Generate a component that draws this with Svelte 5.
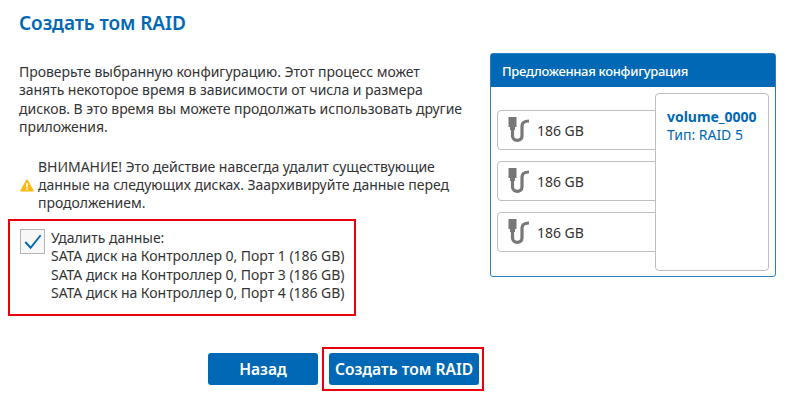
<script>
  const disks = [1, 2, 3];
  const ports = [1, 3, 4];
</script>

<div class="page">
  <h1>Создать том RAID</h1>
  <div class="columns">
    <div class="left">
      <p class="intro">Проверьте выбранную конфигурацию. Этот процесс может занять некоторое время в зависимости от числа и размера дисков. В это время вы можете продолжать использовать другие приложения.</p>
      <div class="warn">
        <svg class="warn-icon" viewBox="0 0 14 13" width="14" height="13"><path d="M7 1.200 13 11.800H1Z" fill="#fcb913" stroke="#fcb913" stroke-width="1.600" stroke-linejoin="round"/><rect x="6.200" y="4" width="1.600" height="4.400" fill="#fff"/><rect x="6.200" y="9.300" width="1.600" height="1.600" fill="#fff"/></svg>
        <p>ВНИМАНИЕ! Это действие навсегда удалит существующие данные на следующих дисках. Заархивируйте данные перед продолжением.</p>
      </div>
      <div class="confirm">
        <span class="check">
          <svg viewBox="0 0 24 24" width="23" height="23"><path d="M4.500 12.500 10 18.500 20.500 5.500" fill="none" stroke="#0068b5" stroke-width="2"/></svg>
        </span>
        <div class="confirm-text">
          <div>Удалить данные:</div>
          {#each ports as p}
            <div>SATA диск на Контроллер 0, Порт {p} (186 GB)</div>
          {/each}
        </div>
      </div>
    </div>
    <section class="panel">
      <header>Предложенная конфигурация</header>
      <div class="panel-body">
        <div class="disks">
          {#each disks as d (d)}
            <div class="disk">
              <svg viewBox="0 0 24 28" width="24" height="28">
                <rect x="1.500" y="1" width="8" height="10" fill="#777"/>
                <rect x="3" y="11" width="5" height="3" fill="#777"/>
                <path d="M5.500 14v6c0 5.500 9.500 6 9.500 0V10c0-3 2-5 7-5" fill="none" stroke="#777" stroke-width="3.200"/>
              </svg>
              <span>186 GB</span>
            </div>
          {/each}
        </div>
        <div class="volume">
          <strong>volume_0000</strong>
          <span>Тип: RAID 5</span>
        </div>
      </div>
    </section>
  </div>
  <div class="actions">
    <button class="btn back">Назад</button>
    <div class="highlight"><button class="btn">Создать том RAID</button></div>
  </div>
</div>

<style>
  :global(body) { margin: 0; background: #fff; }
  .page {
    width: 800px; height: 416px; box-sizing: border-box; overflow: hidden;
    padding: 11px 24px 0 19px;
    font-family: "Noto Sans", sans-serif; font-size: 14px; color: #333;
    letter-spacing: -0.03px;
  }
  h1 { margin: 0; font-size: 19px; line-height: 24px; font-weight: 600; color: #0068b5; letter-spacing: -0.1px; }
  .columns { display: flex; justify-content: space-between; align-items: flex-start; margin-top: 18px; }
  .left { width: 450px; margin-top: 10px; }
  p { margin: 0; line-height: 18.400px; }
  .intro { width: 445px; }
  .warn { display: flex; align-items: center; gap: 4px; margin-top: 21px; margin-left: 1px; width: 440px; }
  .warn-icon { flex: none; }
  .confirm {
    display: flex; box-sizing: border-box; width: 348px; height: 97px;
    margin: 6px 0 0 -11px; padding: 8px 0 0 10px; gap: 6px;
    border: 2px solid #e8000d;
    line-height: 18.400px;
  }
  .check {
    flex: none; width: 25px; height: 25px; box-sizing: border-box; border: 1px solid #b3b3b3; background: #f7f7f7;
  }
  .check svg { display: block; }
  .panel {
    position: relative; width: 286px; height: 224px; box-sizing: border-box;
    border: 1px solid #2a7fc4; border-radius: 3px;
  }
  header {
    height: 33px; background: #0068b5; color: #fff; font-weight: 500; font-size: 13px;
    display: flex; align-items: center; padding-left: 11px; letter-spacing: -0.3px;
  }
  .panel-body { padding: 23px 0 0 6px; }
  .disks { display: flex; flex-direction: column; gap: 11px; width: 170px; }
  .disk {
    display: flex; align-items: center; gap: 6px; height: 40px; box-sizing: border-box;
    border: 1px solid #bdbdbd; border-radius: 4px; padding-left: 9px;
  }
  .volume {
    position: absolute; left: 164px; top: 39px; width: 114px; height: 178px; box-sizing: border-box;
    background: #fff; border: 1px solid #bdbdbd; border-radius: 4px;
    padding: 14px 0 0 11px; display: flex; flex-direction: column; color: #0068b5; line-height: 18px;
  }
  .volume strong { font-weight: 700; }
  .actions { display: flex; align-items: center; margin: 31px 0 0 189px; gap: 4px; }
  .btn {
    height: 32px; border: 0; border-radius: 3px; background: #0068b5; color: #fff;
    font: 600 15.600px "Noto Sans", sans-serif; letter-spacing: 0; padding: 0; display: block;
  }
  .back { width: 110px; }
  .highlight { border: 2px solid #e8000d; padding: 4px 3px 4px 5px; }
  .highlight .btn { width: 150px; }
</style>
